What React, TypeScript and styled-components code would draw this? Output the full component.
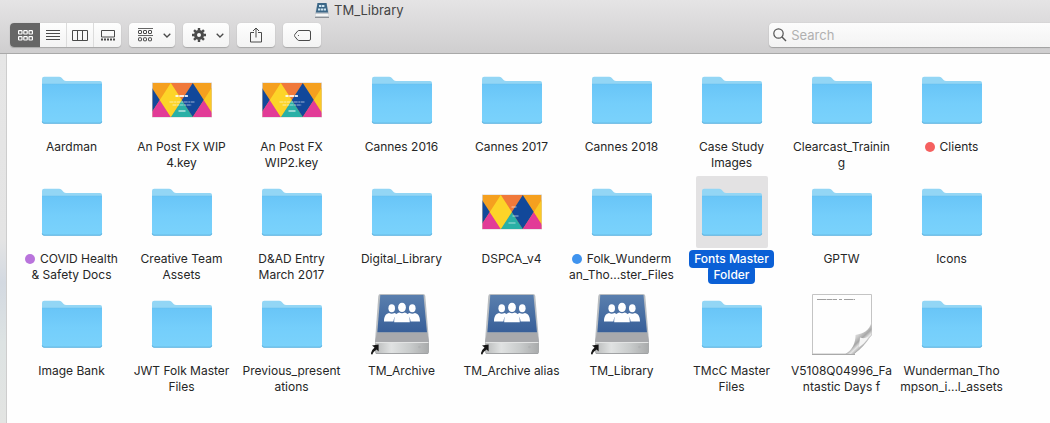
import React from 'react';
import styled, { createGlobalStyle, css } from 'styled-components';

const GlobalStyle = createGlobalStyle`
  * { box-sizing: border-box; }
  body {
    margin: 0;
    background: #fefefe;
    font-family: Inter, "Liberation Sans", sans-serif;
    color: #262626;
  }
`;

const Window = styled.div`
  display: flex;
  flex-direction: column;
  min-height: 100vh;
  overflow: hidden;
`;

const Header = styled.header`
  display: flex;
  flex-direction: column;
  gap: 3px;
  height: 54px;
  background: linear-gradient(#e5e4e5, #cfcecf);
  border-bottom: 1px solid #a9a9a9;
`;

const TitleBar = styled.div`
  display: flex;
  align-items: center;
  gap: 5px;
  height: 20px;
  padding-left: 30%;
`;

const Title = styled.h1`
  margin: 0;
  font-size: 13px;
  line-height: 20px;
  font-weight: 400;
  color: #444;
`;

const Toolbar = styled.div`
  display: flex;
  align-items: center;
  gap: 8px;
  padding-left: 10px;
`;

const Group = styled.div`
  display: flex;
  height: 24px;
  border-radius: 4px;
  overflow: hidden;
  background: linear-gradient(#fefefe, #f3f3f3);
  box-shadow: 0 1px 1px #a8a8a8, 0 0 1px #bbb;
`;

const ToolButton = styled.button<{ $width: number; $active?: boolean; $divided?: boolean; $menu?: boolean }>`
  display: flex;
  align-items: center;
  justify-content: center;
  gap: 10px;
  width: ${p => p.$width}px;
  padding: 0 0 0 ${p => (p.$menu ? 4 : 0)}px;
  border: 0;
  border-left: ${p => (p.$divided ? '1px solid #dcdcdc' : '0')};
  background: ${p => (p.$active ? '#666' : 'transparent')};
  color: ${p => (p.$active ? '#fff' : '#4a4a4a')};
`;

const SearchField = styled.label`
  display: flex;
  align-items: center;
  gap: 4px;
  width: 27%;
  height: 24px;
  margin-left: auto;
  padding-left: 4px;
  border-radius: 4px 0 0 4px;
  background: linear-gradient(#fcfcfc, #f3f3f3);
  box-shadow: 0 1px 1px #a0a0a0, 0 0 1px #aaa;
  color: #555;
`;

const SearchInput = styled.input`
  flex: 1;
  min-width: 0;
  padding: 0;
  border: 0;
  outline: 0;
  background: transparent;
  font: 13px/20px Inter, "Liberation Sans", sans-serif;
  &::placeholder { color: #b0b0b0; opacity: 1; }
`;

const Body = styled.div`
  display: flex;
  flex: 1;
`;

const SidebarEdge = styled.div`
  width: 7px;
  background: linear-gradient(#e6e6e6 0%, #e4e4e4 50%, #d3d9e1 62%, #dde3e3 78%, #e3e4e2 100%);
  border-right: 1px solid #cdcdcd;
`;

const Files = styled.ul`
  flex: 1;
  display: grid;
  grid-template-columns: repeat(auto-fill, 110px);
  grid-auto-rows: 112px;
  align-content: start;
  margin: 0;
  padding: 10px 0 0 10px;
  list-style: none;
`;

const FileItem = styled.li`
  display: flex;
  flex-direction: column;
  align-items: center;
  gap: 3px;
`;

const IconBox = styled.div<{ $selected?: boolean }>`
  width: 72px;
  height: 72px;
  border-radius: 2px;
  background: ${p => (p.$selected ? '#e3e2e3' : 'transparent')};
  svg { display: block; }
`;

const Name = styled.div`
  display: flex;
  flex-direction: column;
  align-items: center;
  padding-right: 1px;
  font-size: 12px;
  line-height: 16px;
  white-space: nowrap;
`;

const Line = styled.span<{ $selected?: boolean }>`
  display: flex;
  align-items: center;
  gap: 5px;
  ${p =>
    p.$selected &&
    css`
      padding: 0 4px;
      border-radius: 3px;
      background: #0b60d6;
      box-shadow: 0 0 0 1px #0b60d6;
      color: #fff;
      font-weight: 500;
    `}
`;

const Tag = styled.i<{ $color: string }>`
  width: 10px;
  height: 10px;
  border-radius: 50%;
  background: ${p => p.$color};
`;

const Folder = () => (
  <svg width="72" height="72" viewBox="0 0 72 72" aria-hidden="true">
    <defs>
      <linearGradient id="folder" x1="0" y1="0" x2="0" y2="1">
        <stop offset="0" stopColor="#69c5f7" />
        <stop offset=".5" stopColor="#74cefb" />
        <stop offset="1" stopColor="#7ad2fb" />
      </linearGradient>
    </defs>
    <path d="M6 56V15q0-2.200 2.200-2.200H23q1.600 0 2.600 1l2 2.200q1 1 2.600 1H64q2 0 2 2V40H6z" fill="#93d6f5" />
    <path d="M6 20h60V57.500q0 2-2 2H8q-2 0-2-2z" fill="url(#folder)" />
    <path d="M6 20h60" stroke="#62bdee" strokeWidth="1" opacity=".4" />
    <path d="M6.300 57.500q0 1.700 1.700 1.700h56q1.700 0 1.700-1.700" fill="none" stroke="#5fb0dc" strokeWidth="1" />
  </svg>
);

const Keynote = ({ brief }: { brief?: boolean }) => (
  <svg width="72" height="72" viewBox="0 0 72 72" aria-hidden="true">
    <rect x="6" y="18.500" width="60" height="35" fill="#bbb" opacity=".6" />
    <svg x="6.500" y="19" width="59" height="34" viewBox="0 0 59 34">
      <rect width="59" height="34" fill="#f5a01f" />
      <path d="M-3.700 0L7.300 17L-3.700 34z" fill="#12489a" />
      <path d="M7.300 17L18.300 34H-3.700z" fill="#e23b97" />
      <path d="M18.300 0h22L29.300 17z" fill="#f0793a" />
      <path d="M29.300 17L40.300 34h-22z" fill="#2ab0a6" />
      <path d="M18.300 0l11 17-11 17-11-17z" fill="#fdd428" />
      <path d="M40.300 0l11 17-11 17-11-17z" fill="#12489a" />
      <path d="M51.300 17l11 17h-22z" fill="#e23b97" />
      <path d="M62.300 0v34l-11-17z" fill="#fbc926" />
      {brief ? (
        <path d="M29 12h5M30 21h6M26 28h7" stroke="#fff" strokeWidth="1" opacity=".6" />
      ) : (
        <g stroke="#fff">
          <path d="M23 13h13" strokeWidth="2" strokeDasharray="3 .8 5 .6" opacity=".85" />
          <path d="M17 19h25M20 22h19" strokeWidth=".9" strokeDasharray="4 .6 2 .5" opacity=".65" />
          <path d="M26 28h7" strokeWidth="1.200" opacity=".85" />
        </g>
      )}
    </svg>
  </svg>
);

const Drive = () => (
  <svg width="72" height="72" viewBox="0 0 72 72" aria-hidden="true">
    <defs>
      <linearGradient id="screen" x1="0" y1="0" x2="0" y2="1">
        <stop offset="0" stopColor="#5a7fae" />
        <stop offset="1" stopColor="#385f98" />
      </linearGradient>
      <linearGradient id="front" x1="0" y1="0" x2="1" y2="0">
        <stop offset="0" stopColor="#b8baba" />
        <stop offset=".3" stopColor="#e0e2e2" />
        <stop offset=".65" stopColor="#c8cbcb" />
        <stop offset="1" stopColor="#a8aaab" />
      </linearGradient>
    </defs>
    <path d="M14.500 6h42.500q2 0 2.300 2L63 53v11q0 2-2 2H11q-2 0-2-2V53L12.300 8q.2-2 2.200-2z" fill="#b9bdc1" />
    <path d="M14.300 7h43.200l3.500 37.500H11.300z" fill="url(#screen)" />
    <path d="M11 44.500h50.200L63 54H9z" fill="#a8a9ac" />
    <path d="M9 54h54v9.500q0 2-2 2H11q-2 0-2-2z" fill="url(#front)" />
    <path d="M9.500 54.500h53" stroke="#e3e4e4" strokeWidth="1" />
    <path d="M10 65.500h52" stroke="#a0a2a4" strokeWidth="1" />
    <circle cx="53.500" cy="59" r="1.300" fill="#b0b2b3" />
    <g fill="#fff">
      <ellipse cx="25.700" cy="20.200" rx="3.300" ry="4" />
      <ellipse cx="46.300" cy="20.200" rx="3.300" ry="4" />
      <path d="M18 33.500c0-5 1.500-7.500 5-8.500q2.700 1.500 5.400 0 2 .5 3 1.800-3.600 2-4 6.700z" />
      <path d="M54 33.500c0-5-1.500-7.500-5-8.500q-2.700 1.500-5.400 0-2 .5-3 1.800 3.600 2 4 6.700z" />
      <ellipse cx="36" cy="19.400" rx="3.900" ry="4.700" />
      <path d="M28.200 34.200c0-5.500 1.300-8.600 5-9.700q2.800 1.600 5.600 0c3.700 1.100 5 4.200 5 9.700z" />
    </g>
    <path d="M12.600 56.500v7l-2-1.900q-2.800 1.700-4.300 5-1.700-.2-1.300-1.700 1-3.200 3.500-5.300L6 57.500z" fill="#171717" />
  </svg>
);

const TextDocument = () => (
  <svg width="72" height="72" viewBox="0 0 72 72" aria-hidden="true">
    <defs>
      <linearGradient id="curl" gradientUnits="userSpaceOnUse" x1="46" y1="42" x2="60" y2="57">
        <stop offset="0" stopColor="#fefefe" />
        <stop offset=".4" stopColor="#cfcfcf" />
        <stop offset=".62" stopColor="#a6a6a6" />
        <stop offset=".78" stopColor="#e6e6e6" />
        <stop offset="1" stopColor="#8f8f8f" />
      </linearGradient>
    </defs>
    <path d="M6.500 6.500h59V47L48 66H6.500z" fill="#fefefe" stroke="#c4c4c4" />
    <path d="M6 66.500h43" stroke="#a9a9a9" />
    <path d="M65.500 34c-2 9-8 11-16 13 0 8-3 15-10 19H48Q58 59 65.500 47z" fill="url(#curl)" />
    <path d="M54 49.500q4 1.500 8.500-.5-3.500 6.500-9.500 10z" fill="#f5f5f5" />
    <path d="M11 11.500h38" stroke="#888" strokeWidth="1" strokeDasharray="9 .5 6 .5 4 2 3 2" opacity=".8" />
  </svg>
);

const dotGrid = (xs: number[], ys: number[], size: number) =>
  ys.flatMap(y => xs.map(x => <rect key={`${x}-${y}`} x={x} y={y} width={size} height={size} rx=".5" />));

const GridIcon = () => (
  <svg width="15" height="11" fill="none" stroke="currentColor" strokeWidth="1.200">
    {dotGrid([0.6, 5.8, 11], [0.6, 6.6], 3.4)}
  </svg>
);
const ListIcon = () => (
  <svg width="14" height="12" stroke="currentColor"><path d="M0 1.500h14M0 4.500h14M0 7.500h14M0 10.500h14" /></svg>
);
const ColumnsIcon = () => (
  <svg width="16" height="11" fill="none" stroke="currentColor"><path d="M.5.5h15v10H.5zM5.500.5v10M10.500.5v10" /></svg>
);
const GalleryIcon = () => (
  <svg width="14" height="11" fill="none" stroke="currentColor">
    <path d="M.5.500h13v6.500H.5z" />
    <path d="M0 9.500h14" strokeWidth="2" strokeDasharray="2 1" />
  </svg>
);
const ArrangeIcon = () => (
  <svg width="15" height="14" fill="none" stroke="currentColor">
    <path d="M0 .500h15M0 7.500h15" opacity=".85" />
    {dotGrid([0.5, 5.5, 10.5], [2.5, 9.8], 3)}
  </svg>
);
const Chevron = () => (
  <svg width="8" height="5" fill="none" stroke="currentColor" strokeWidth="1.300"><path d="M.7.700L4 4l3.300-3.300" /></svg>
);
const GearIcon = () => (
  <svg width="14" height="14" viewBox="-7 -7 14 14" stroke="currentColor" fill="none">
    <circle r="3.500" strokeWidth="3" />
    {[0, 45, 90, 135, 180, 225, 270, 315].map(a => (
      <path key={a} d="M0-4.500V-7" strokeWidth="2.400" transform={`rotate(${a})`} />
    ))}
  </svg>
);
const ShareIcon = () => (
  <svg width="12" height="16" fill="none" stroke="currentColor">
    <path d="M4 5.500H.5v9.500h11V5.500H8M6 10.500V1M3 4l3-3 3 3" />
  </svg>
);
const TagIcon = () => (
  <svg width="17" height="11" fill="none" stroke="currentColor">
    <path d="M5 .5h10q1.500 0 1.500 1.500v7q0 1.500-1.500 1.500H5q-.8 0-1.400-.6L.8 6.500q-.8-1 0-2L3.600 1.100Q4.200.5 5 .5z" />
    <circle cx="4.500" cy="5.500" r=".6" fill="currentColor" stroke="none" />
  </svg>
);
const SearchIcon = () => (
  <svg width="14" height="14" fill="none" stroke="currentColor" strokeWidth="1.200">
    <circle cx="5.500" cy="5.500" r="4.700" />
    <path d="M9 9l4 4" strokeWidth="1.500" />
  </svg>
);
const VolumeIcon = () => (
  <svg width="14" height="16" viewBox="0 0 14 16" aria-hidden="true">
    <path d="M2.500 1h9L14 11v4.500H0V11z" fill="#c3c9ce" />
    <path d="M2.500 1h9l1.600 9.500H.9z" fill="#3c6787" />
    <path d="M4 4h6M3 7.500h8" stroke="#cfe6f2" strokeWidth="2.200" strokeDasharray="2.300 .6" />
    <path d="M.5 13h13" stroke="#f5f5f5" strokeWidth="2" />
    <path d="M0 15.500h14" stroke="#8d9196" strokeWidth="1" />
  </svg>
);

type Kind = 'folder' | 'keynote' | 'slides' | 'drive' | 'document';
interface Entry {
  lines: string[];
  kind?: Kind;
  tag?: string;
  selected?: boolean;
}

const entries: Entry[] = [
  { lines: ['Aardman'] },
  { lines: ['An Post FX WIP', '4.key'], kind: 'keynote' },
  { lines: ['An Post FX', 'WIP2.key'], kind: 'keynote' },
  { lines: ['Cannes 2016'] },
  { lines: ['Cannes 2017'] },
  { lines: ['Cannes 2018'] },
  { lines: ['Case Study', 'Images'] },
  { lines: ['Clearcast_Trainin', 'g'] },
  { lines: ['Clients'], tag: '#f5605f' },
  { lines: ['COVID Health', '& Safety Docs'], tag: '#b974dc' },
  { lines: ['Creative Team', 'Assets'] },
  { lines: ['D&AD Entry', 'March 2017'] },
  { lines: ['Digital_Library'] },
  { lines: ['DSPCA_v4'], kind: 'slides' },
  { lines: ['Folk_Wunderm', 'an_Tho...ster_Files'], tag: '#3f93ee' },
  { lines: ['Fonts Master', 'Folder'], selected: true },
  { lines: ['GPTW'] },
  { lines: ['Icons'] },
  { lines: ['Image Bank'] },
  { lines: ['JWT Folk Master', 'Files'] },
  { lines: ['Previous_present', 'ations'] },
  { lines: ['TM_Archive'], kind: 'drive' },
  { lines: ['TM_Archive alias'], kind: 'drive' },
  { lines: ['TM_Library'], kind: 'drive' },
  { lines: ['TMcC Master', 'Files'] },
  { lines: ['V5108Q04996_Fa', 'ntastic Days f'], kind: 'document' },
  { lines: ['Wunderman_Tho', 'mpson_i...l_assets'] },
];

const FileIcon = ({ kind = 'folder' }: { kind?: Kind }) => {
  switch (kind) {
    case 'keynote':
      return <Keynote />;
    case 'slides':
      return <Keynote brief />;
    case 'drive':
      return <Drive />;
    case 'document':
      return <TextDocument />;
    default:
      return <Folder />;
  }
};

export default function App() {
  return (
    <Window>
      <GlobalStyle />
      <Header>
        <TitleBar>
          <VolumeIcon />
          <Title>TM_Library</Title>
        </TitleBar>
        <Toolbar>
          <Group role="group" aria-label="View">
            <ToolButton $width={30} $active aria-pressed="true" aria-label="Icons"><GridIcon /></ToolButton>
            <ToolButton $width={26} aria-label="List"><ListIcon /></ToolButton>
            <ToolButton $width={27} $divided aria-label="Columns"><ColumnsIcon /></ToolButton>
            <ToolButton $width={28} $divided aria-label="Gallery"><GalleryIcon /></ToolButton>
          </Group>
          <Group>
            <ToolButton $width={46} $menu aria-label="Arrange"><ArrangeIcon /><Chevron /></ToolButton>
          </Group>
          <Group>
            <ToolButton $width={46} $menu aria-label="Actions"><GearIcon /><Chevron /></ToolButton>
          </Group>
          <Group>
            <ToolButton $width={38} aria-label="Share"><ShareIcon /></ToolButton>
          </Group>
          <Group>
            <ToolButton $width={38} aria-label="Edit tags"><TagIcon /></ToolButton>
          </Group>
          <SearchField>
            <SearchIcon />
            <SearchInput type="text" placeholder="Search" aria-label="Search" />
          </SearchField>
        </Toolbar>
      </Header>
      <Body>
        <SidebarEdge />
        <Files>
          {entries.map(entry => (
            <FileItem key={entry.lines.join('')}>
              <IconBox $selected={entry.selected}>
                <FileIcon kind={entry.kind} />
              </IconBox>
              <Name>
                {entry.lines.map((line, i) => (
                  <Line key={line} $selected={entry.selected}>
                    {i === 0 && entry.tag && <Tag $color={entry.tag} />}
                    {line}
                  </Line>
                ))}
              </Name>
            </FileItem>
          ))}
        </Files>
      </Body>
    </Window>
  );
}
